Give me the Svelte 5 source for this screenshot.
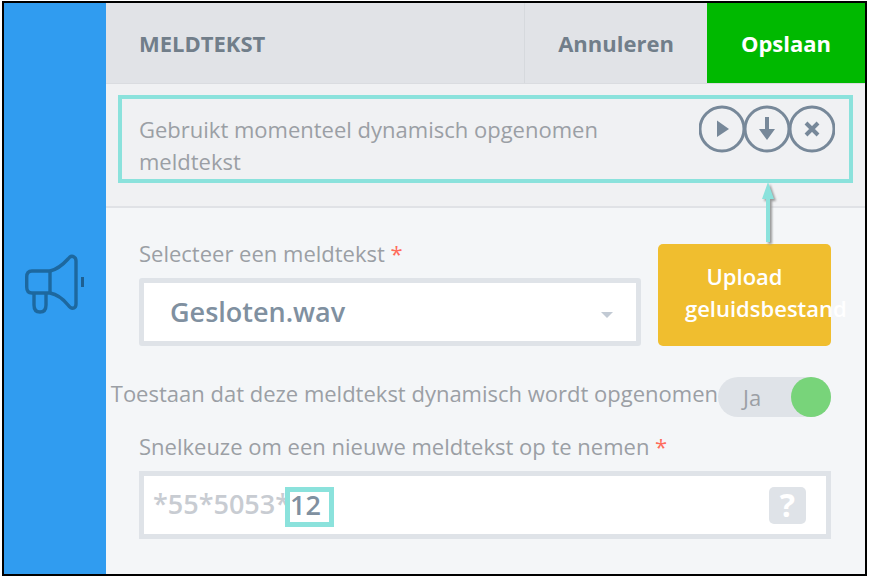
<script lang="ts">
  let files = ['Gesloten.wav'];
  let selected = files[0];
  let allowDynamic = true;
  let code = '12';
</script>

<div class="dialog">
  <aside class="rail">
    <svg class="megaphone" viewBox="0 0 60 60" aria-hidden="true">
      <g fill="none" stroke="#1d689f" stroke-width="3.4" stroke-linejoin="round">
        <path d="M25 17 H7 Q1.700 17 1.700 23 V33 Q1.700 39 7 39 H25 Z" />
        <path d="M25 17 Q34 15 43 5 Q46 1 49 3 Q51 4 51 7 V50 Q51 53 49 54 Q46 55 43 51 Q35 41 25 39" />
        <path d="M9 39 V51 Q9 58 15 58 Q21 58 21 51 V39" />
      </g>
      <rect x="56" y="23" width="3" height="10" fill="#1d5f92" />
    </svg>
  </aside>

  <form class="content" on:submit|preventDefault>
    <header class="header">
      <h1>MELDTEKST</h1>
      <button type="button" class="cancel">Annuleren</button>
      <button type="submit" class="save">Opslaan</button>
    </header>

    <section class="current">
      <div class="current-box">
        <p>Gebruikt momenteel dynamisch opgenomen meldtekst</p>
        <div class="actions">
          <button type="button" aria-label="Afspelen">
            <svg viewBox="0 0 46 48">
              <ellipse cx="23" cy="24" rx="22" ry="22" />
              <path d="M18 15.500 L30 24 L18 32 Z" />
            </svg>
          </button>
          <button type="button" aria-label="Downloaden">
            <svg viewBox="0 0 46 48">
              <ellipse cx="23" cy="24" rx="22" ry="22" />
              <path d="M21 12 H25 V24 H31 L23 35 L15 24 H21 Z" />
            </svg>
          </button>
          <button type="button" aria-label="Verwijderen">
            <svg viewBox="0 0 46 48">
              <ellipse cx="23" cy="24" rx="22" ry="22" />
              <path class="cross" d="M17 18 L29 30 M29 18 L17 30" />
            </svg>
          </button>
        </div>
      </div>
      <svg class="pointer" viewBox="0 0 20 64" aria-hidden="true">
        <path d="M8 0 L14 17 H10 V60 H6 V17 H2 Z" />
      </svg>
    </section>

    <section class="fields">
      <div class="file-row">
        <div class="field">
          <label for="message">Selecteer een meldtekst <span class="required">*</span></label>
          <div class="select-wrap">
            <select id="message" bind:value={selected}>
              {#each files as file}
                <option value={file}>{file}</option>
              {/each}
            </select>
            <svg class="caret" viewBox="0 0 12 6" aria-hidden="true"><path d="M0 0 H12 L6 6 Z" /></svg>
          </div>
        </div>
        <button type="button" class="upload">Upload geluidsbestand</button>
      </div>

      <div class="toggle-row">
        <label for="dynamic">Toestaan dat deze meldtekst dynamisch wordt opgenomen</label>
        <label class="toggle">
          <input id="dynamic" type="checkbox" bind:checked={allowDynamic} />
          <span class="state">{allowDynamic ? 'Ja' : 'Nee'}</span>
          <span class="knob"></span>
        </label>
      </div>

      <div class="field">
        <label for="code">Snelkeuze om een nieuwe meldtekst op te nemen <span class="required">*</span></label>
        <div class="code-box">
          <span class="prefix">*55*5053*</span>
          <input id="code" class="code" type="text" bind:value={code} />
          <button type="button" class="help" aria-label="Help">?</button>
        </div>
      </div>
    </section>
  </form>
</div>

<style>
  :global(body) {
    background: #fff;
  }

  .dialog {
    display: flex;
    box-sizing: border-box;
    min-height: calc(100vh - 3px);
    margin: 1px 3px 2px 2px;
    border: 2px solid #000;
    background: #f4f6f8;
    color: #9b9fa5;
    font-family: 'Open Sans', 'Noto Sans', sans-serif;
    font-size: 22px;
    line-height: 32px;
  }

  button,
  input,
  select {
    margin: 0;
    padding: 0;
    border: 0;
    font: inherit;
    color: inherit;
    background: none;
  }

  .rail {
    display: flex;
    flex: 0 0 102px;
    align-items: center;
    justify-content: center;
    background: #309cf0;
  }

  .megaphone {
    width: 60px;
    height: 60px;
    margin-bottom: 10px;
  }

  .content {
    flex: 1;
    min-width: 0;
  }

  .header {
    display: flex;
    height: 80px;
    border-bottom: 1px solid #dadce0;
    background: #e1e3e7;
    color: #717e8a;
    font-weight: 700;
  }

  .header h1 {
    flex: 1;
    margin: 0;
    padding-left: 33px;
    font-size: 22px;
    line-height: 80px;
  }

  .cancel {
    padding: 0 33px;
    border-left: 1px solid #d6d9dd;
  }

  .save {
    padding: 0 34px;
    background: #00b900;
    color: #fff;
  }

  .current {
    position: relative;
    padding: 11px 12px 23px;
    border-bottom: 2px solid #e0e2e6;
    background: #f0f1f3;
  }

  .current-box {
    display: flex;
    justify-content: space-between;
    border: 4px solid #8be2dc;
    padding: 14px 14px 2px 17px;
  }

  .current p {
    max-width: 480px;
    margin: 0;
  }

  .actions {
    display: flex;
    margin-top: -8px;
  }

  .actions button {
    height: 48px;
  }

  .actions svg {
    display: block;
    width: 46px;
    height: 48px;
    fill: #778899;
  }

  .actions button + button {
    margin-left: -1px;
  }

  .actions ellipse {
    fill: none;
    stroke: #778899;
    stroke-width: 3;
  }

  .actions .cross {
    stroke: #778899;
    stroke-width: 4;
  }

  .pointer {
    position: absolute;
    z-index: 1;
    top: 98px;
    right: 85px;
    width: 20px;
    height: 64px;
    fill: #8be2dc;
    filter: drop-shadow(2px 2px 1px #999);
  }

  .fields {
    padding: 29px 34px 34px 33px;
  }

  .file-row {
    display: flex;
    gap: 17px;
  }

  .field {
    flex: 1;
    min-width: 0;
  }

  .field > label {
    display: block;
    margin-bottom: 9px;
  }

  .required {
    color: #ff6c5c;
  }

  .select-wrap {
    position: relative;
  }

  select {
    box-sizing: border-box;
    display: block;
    width: 100%;
    height: 68px;
    padding: 0 50px 0 26px;
    appearance: none;
    border: 5px solid #dfe3e8;
    border-radius: 3px;
    background: #fff;
    color: #8090a0;
    font-size: 27px;
    font-weight: 600;
  }

  .caret {
    position: absolute;
    top: 34px;
    right: 28px;
    width: 12px;
    height: 6px;
    fill: #c2cad4;
    pointer-events: none;
  }

  /* the long word is allowed to run out over the right edge */
  .upload {
    box-sizing: border-box;
    flex: 0 0 173px;
    min-width: 0;
    margin-top: 7px;
    padding: 0 27px 6px;
    border-radius: 5px;
    background: #f0be2f;
    color: #fff;
    font-weight: 600;
  }

  .toggle-row {
    display: flex;
    justify-content: flex-end;
    margin: 31px 0 13px;
    white-space: nowrap;
  }

  .toggle {
    position: relative;
    display: flex;
    flex: 0 0 113px;
    align-items: center;
    justify-content: space-between;
    height: 40px;
    border-radius: 20px;
    background: #dfe3e8;
  }

  .toggle input {
    position: absolute;
    inset: 0;
    opacity: 0;
  }

  .state {
    padding-left: 25px;
  }

  .knob {
    width: 40px;
    height: 40px;
    border-radius: 50%;
    background: #78d47a;
  }

  .toggle input:not(:checked) ~ .knob {
    order: -1;
    background: #b5bcc5;
  }

  .code-box {
    display: flex;
    align-items: center;
    box-sizing: border-box;
    height: 68px;
    padding: 0 20px 0 9px;
    border: 5px solid #dfe3e8;
    background: #fff;
    font-size: 27px;
    font-weight: 600;
  }

  .prefix {
    padding-bottom: 2px;
    color: #c8ccd2;
  }

  .code {
    box-sizing: border-box;
    width: 49px;
    height: 40px;
    margin: 3px auto 0 -5px;
    padding-bottom: 4px;
    border: 5px solid #8be2dc;
    background: #fff;
    color: #8090a0;
  }

  .help {
    width: 37px;
    height: 37px;
    border-radius: 5px;
    background: #dfe3e8;
    color: #fff;
    font-size: 32px;
    font-weight: 700;
  }
</style>
